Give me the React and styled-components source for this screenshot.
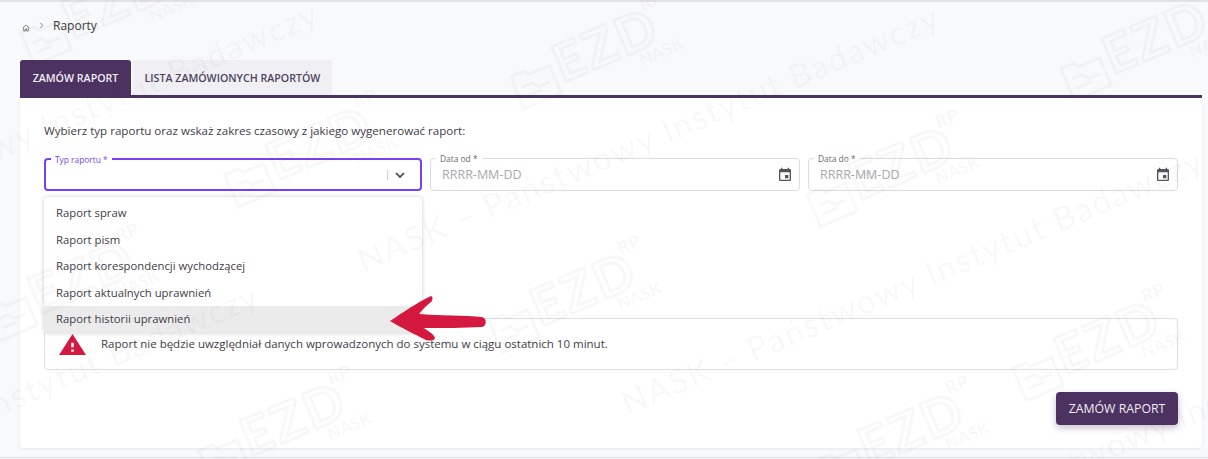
import React from "react";
import styled, { createGlobalStyle } from "styled-components";

const Global = createGlobalStyle`
  html, body { margin: 0; padding: 0; background: #f8f9fb; }
  body { font-family: "Open Sans", "Noto Sans", sans-serif; color: #3d3a45; }
  #root { width: 1208px; height: 459px; overflow: hidden; }
`;

const Page = styled.div`
  position: relative;
  width: 1208px;
  height: 459px;
  box-sizing: border-box;
  padding: 2px 6px 0 20px;
  background: #f8f9fb;
  overflow: hidden;
  display: flex;
  flex-direction: column;
  &::before { content: ""; position: absolute; left: 0; right: 0; top: 0; height: 2px; background: #e2e2e4; }
  &::after { content: ""; position: absolute; left: 0; right: 0; bottom: 1px; height: 1px; background: #dedee2; }
`;

const Breadcrumbs = styled.nav`
  display: flex;
  align-items: center;
  height: 46px;
  padding-left: 2px;
  gap: 6px;
  font-size: 12px;
  color: #3a3a42;
`;
const Crumb = styled.span`
  margin-left: 3px;
  padding-bottom: 0;
`;
const Icon = styled.svg`
  flex: none;
  display: block;
`;
const HomeGlyph = styled(Icon)`
  margin-top: 5px;
`;
const ChevronGlyph = styled(Icon)`
  margin-left: 3px;
`;

const Tabs = styled.div`
  display: flex;
  margin-top: 12px;
  height: 35px;
  gap: 2px;
`;
const Tab = styled.div`
  display: flex;
  align-items: center;
  justify-content: center;
  box-sizing: border-box;
  width: ${(p) => p.$w}px;
  border-radius: 3px 3px 0 0;
  font-size: 10.65px;
  font-weight: 600;
  background: ${(p) => (p.$active ? "#4b3260" : "#f0eff3")};
  color: ${(p) => (p.$active ? "#f1edf4" : "#4e4460")};
`;

const Card = styled.section`
  flex: none;
  box-sizing: border-box;
  height: 353px;
  padding: 26px 24px 0;
  background: #fff;
  border-top: 3px solid #4b3260;
  border-radius: 0 0 4px 4px;
  box-shadow: 0 1px 3px rgba(40, 40, 60, 0.08);
  display: flex;
  flex-direction: column;
`;
const Lead = styled.p`
  margin: 0;
  height: 14px;
  line-height: 14px;
  font-size: 11.58px;
  color: #3f3c48;
`;
const Fields = styled.div`
  position: relative;
  display: grid;
  grid-template-columns: 378px 370px 370px;
  gap: 8px;
  margin-top: 20px;
`;
const Field = styled.div`
  position: relative;
  height: 33px;
  box-sizing: border-box;
  display: flex;
  align-items: center;
  justify-content: space-between;
  padding: 0 6px 0 11px;
  border-radius: 4px;
  border: ${(p) => (p.$focus ? "2px solid #7a3ff0" : "1px solid #dcdcdf")};
`;
const FloatLabel = styled.label`
  position: absolute;
  left: 5px;
  top: -6px;
  padding: 0 4px;
  background: #fff;
  font-size: 8.4px;
  line-height: 11px;
  color: ${(p) => (p.$focus ? "#7a3ff0" : "#6b6870")};
`;
const Placeholder = styled.span`
  font-size: 12.5px;
  color: #a9a8ad;
`;
const SelectControls = styled.div`
  margin-left: auto;
  display: flex;
  align-items: center;
  gap: 4px;
  padding-right: 6px;
`;
const Separator = styled.span`
  width: 1px;
  height: 10px;
  background: #cfcfd3;
`;
const Menu = styled.ul`
  position: absolute;
  z-index: 2;
  left: 0;
  top: 39px;
  width: 378px;
  margin: 0;
  padding: 3px 0 0;
  list-style: none;
  background: #fff;
  border-radius: 4px;
  box-shadow: 0 0 4px rgba(30, 30, 40, 0.22);
`;
const MenuItem = styled.li`
  height: 26.6px;
  line-height: 25px;
  padding-left: 12px;
  font-size: 11.3px;
  color: #3f3c48;
  background: ${(p) => (p.$hover ? "#ebebeb" : "transparent")};
`;
const Alert = styled.div`
  display: flex;
  align-items: flex-start;
  height: 52px;
  box-sizing: border-box;
  margin-top: 127px;
  padding: 15px 0 0 14px;
  gap: 15px;
  border: 1px solid #dfdde6;
  border-radius: 4px;
  font-size: 11.5px;
  color: #3f3c48;
`;
const AlertGlyph = styled.svg`
  flex: none;
  display: block;
  width: 27px;
  height: 21px;
`;
const AlertText = styled.span`
  line-height: 20px;
`;
const Actions = styled.div`
  display: flex;
  justify-content: flex-end;
  margin-top: 22px;
`;
const Button = styled.button`
  width: 122px;
  height: 33px;
  border: 0;
  border-radius: 4px;
  background: #4b3260;
  color: #f1edf4;
  font: 500 12.3px "Open Sans", sans-serif;
  box-shadow: 0 3px 7px rgba(50, 30, 70, 0.28);
`;

const Pointer = styled.svg`
  position: absolute;
  left: 388px;
  top: 294px;
  z-index: 4;
`;

const Watermark = styled.div`
  position: absolute;
  inset: 0;
  z-index: 3;
  overflow: hidden;
  pointer-events: none;
`;
const WmText = styled.div`
  position: absolute;
  left: ${(p) => p.$x}px;
  top: ${(p) => p.$y}px;
  transform: rotate(-23deg);
  transform-origin: 0 100%;
  white-space: nowrap;
  font: 400 33px/40px "Lato", sans-serif;
  letter-spacing: 1.9px;
  color: rgba(60, 60, 70, 0.04);
`;
const WmLogo = styled.div`
  position: absolute;
  left: ${(p) => p.$x}px;
  top: ${(p) => p.$y}px;
  width: 190px;
  height: 70px;
  transform: rotate(-23deg);
  color: rgba(60, 60, 70, 0.035);
`;
const WmFolder = styled.svg`
  position: absolute;
  left: 0;
  top: 16px;
`;
const WmMark = styled.span`
  position: absolute;
  left: 48px;
  top: 2px;
  font: 700 52px/60px "Lato", sans-serif;
  letter-spacing: 3px;
  color: transparent;
  -webkit-text-stroke: 3px rgba(60, 60, 70, 0.035);
`;
const WmRp = styled.span`
  position: absolute;
  left: 150px;
  top: 0;
  font: 800 18px/20px "Lato", sans-serif;
`;
const WmNask = styled.span`
  position: absolute;
  left: 128px;
  top: 52px;
  font: 900 17px/20px "Lato", sans-serif;
`;

const CalendarIcon = () => (
  <Icon width="16" height="16" viewBox="0 0 24 24" fill="#55535c">
    <path d="M17 12h-5v5h5v-5zM16 1v2H8V1H6v2H5c-1.11 0-1.99.9-1.99 2L3 19c0 1.1.89 2 2 2h14c1.1 0 2-.9 2-2V5c0-1.1-.9-2-2-2h-1V1h-2zm3 18H5V8h14v11z" />
  </Icon>
);

const logos = [
  [504, 14], [1054, 6], [218, 112], [482, 258], [192, 388], [800, 132], [1006, 306], [-20, 246], [14, -30], [810, 398],
];
const lines = [
  [-255, 235],
  [366, 239],
  [630, 382],
  [-315, 517],
  [880, 525],
];
const WATERMARK = "NASK – Państwowy Instytut Badawczy";
const items = ["Raport spraw", "Raport pism", "Raport korespondencji wychodzącej", "Raport aktualnych uprawnień", "Raport historii uprawnień"];

export default function App() {
  return (
    <Page>
      <Global />
      <Breadcrumbs>
        <HomeGlyph width="8" height="8" viewBox="0 0 24 24" fill="none" stroke="#77757c" strokeWidth="2.6">
          <path d="M2 12 12 3l10 9M5 10v11h5v-6h4v6h5V10" />
        </HomeGlyph>
        <ChevronGlyph width="5" height="7" viewBox="0 0 5 8" fill="none" stroke="#77757c" strokeWidth="1">
          <path d="M1 1l3 3-3 3" />
        </ChevronGlyph>
        <Crumb>Raporty</Crumb>
      </Breadcrumbs>
      <Tabs>
        <Tab $active $w={111}>ZAMÓW RAPORT</Tab>
        <Tab $w={199}>LISTA ZAMÓWIONYCH RAPORTÓW</Tab>
      </Tabs>
      <Card>
        <Lead>Wybierz typ raportu oraz wskaż zakres czasowy z jakiego wygenerować raport:</Lead>
        <Fields>
          <Field $focus>
            <FloatLabel $focus>Typ raportu *</FloatLabel>
            <SelectControls>
              <Separator />
              <Icon width="16" height="16" viewBox="0 0 24 24" fill="none" stroke="#45434c" strokeWidth="2.6">
                <path d="M6 9l6 6 6-6" />
              </Icon>
            </SelectControls>
          </Field>
          <Field>
            <FloatLabel>Data od *</FloatLabel>
            <Placeholder>RRRR-MM-DD</Placeholder>
            <CalendarIcon />
          </Field>
          <Field>
            <FloatLabel>Data do *</FloatLabel>
            <Placeholder>RRRR-MM-DD</Placeholder>
            <CalendarIcon />
          </Field>
          <Menu>
            {items.map((t, i) => (
              <MenuItem key={t} $hover={i === 4}>{t}</MenuItem>
            ))}
          </Menu>
        </Fields>
        <Alert>
          <AlertGlyph viewBox="1 2 22 19" fill="#d5183f" preserveAspectRatio="none">
            <path d="M1 21h22L12 2 1 21zm12-3h-2v-2h2v2zm0-4h-2v-4h2v4z" />
          </AlertGlyph>
          <AlertText>Raport nie będzie uwzględniał danych wprowadzonych do systemu w ciągu ostatnich 10 minut.</AlertText>
        </Alert>
        <Actions>
          <Button>ZAMÓW RAPORT</Button>
        </Actions>
      </Card>
      <Pointer width="100" height="48" viewBox="0 0 100 48">
        <path
          d="M2 27 C14 19 30 8 43 2 C45 3 45 6 43 8 C38 12 34 16 31 20 C50 22 78 21 94 23 C99 24 99 32 94 33 C76 34 54 34 36 34 C40 37 46 40 47 44 C46 47 42 47 38 46 C26 40 12 33 2 27 Z"
          fill="#d5183f"
        />
      </Pointer>
      <Watermark>
        {lines.map(([x, y], i) => (
          <WmText key={i} $x={x} $y={y}>{WATERMARK}</WmText>
        ))}
        {logos.map(([x, y], i) => (
          <WmLogo key={i} $x={x} $y={y}>
            <WmFolder width="46" height="48" viewBox="0 0 46 48" fill="none" stroke="currentColor" strokeWidth="3">
              <path d="M3 10h14l4 5h22v30H3zM10 24h10l5 6h12M10 34h16" />
            </WmFolder>
            <WmMark>EZD</WmMark>
            <WmRp>RP</WmRp>
            <WmNask>NASK</WmNask>
          </WmLogo>
        ))}
      </Watermark>
    </Page>
  );
}
